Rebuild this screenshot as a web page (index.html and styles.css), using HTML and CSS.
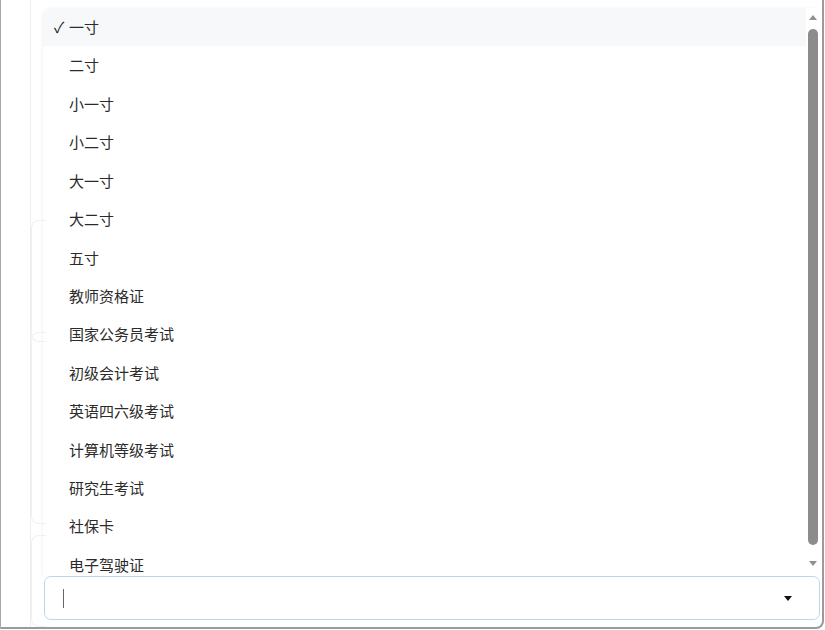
FILE: index.html
```html
<!DOCTYPE html>
<html lang="zh">
<head>
<meta charset="utf-8">
<title>选择</title>
<link rel="stylesheet" href="styles.css">
</head>
<body>
<div class="frame">
  <div class="backdrop">
    <div class="bg-line"></div>
    <div class="bg-card c1"></div>
    <div class="bg-card c2"></div>
    <div class="bg-card c3"></div>
  </div>
  <div class="combo">
    <div class="popup">
      <ul class="list">
        <li class="item selected"><span class="check">✓</span>一寸</li>
        <li class="item">二寸</li>
        <li class="item">小一寸</li>
        <li class="item">小二寸</li>
        <li class="item">大一寸</li>
        <li class="item">大二寸</li>
        <li class="item">五寸</li>
        <li class="item">教师资格证</li>
        <li class="item">国家公务员考试</li>
        <li class="item">初级会计考试</li>
        <li class="item">英语四六级考试</li>
        <li class="item">计算机等级考试</li>
        <li class="item">研究生考试</li>
        <li class="item">社保卡</li>
        <li class="item">电子驾驶证</li>
      </ul>
      <div class="scrollbar">
        <div class="arrow up"></div>
        <div class="thumb"></div>
        <div class="arrow down"></div>
      </div>
    </div>
    <div class="input">
      <span class="cursor"></span>
      <span class="caret"></span>
    </div>
  </div>
</div>
</body>
</html>
```
FILE: styles.css
```css
html, body {
  margin: 0;
  padding: 0;
  background: #ffffff;
  font-family: "Noto Sans CJK SC", "Noto Sans", sans-serif;
}
.frame {
  box-sizing: border-box;
  width: 824px;
  height: 629px;
  border-left: 1px solid #a8a8a8;
  border-right: 2px solid #9a9a9a;
  border-bottom: 2px solid #9a9a9a;
  border-bottom-right-radius: 8px;
  display: flex;
  overflow: hidden;
  background: #fff;
}
.backdrop {
  width: 42px;
  flex: none;
  position: relative;
}
.bg-line {
  position: absolute;
  left: 29px;
  top: 0;
  bottom: 0;
  width: 1px;
  background: #efefef;
}
.bg-card {
  position: absolute;
  left: 30px;
  width: 14px;
  border: 1px solid #f0f0f0;
  border-right: none;
  border-radius: 8px 0 0 8px;
}
.c1 { top: 220px; height: 120px; }
.c2 { top: 332px; height: 190px; }
.c3 { top: 535px; height: 90px; }
.combo {
  flex: 1;
  display: flex;
  flex-direction: column;
  padding-top: 8px;
  padding-right: 2px;
}
.popup {
  height: 568px;
  display: flex;
  background: #fff;
  border-top-left-radius: 8px;
  box-shadow: -1px 0 3px rgba(0,0,0,0.05);
  overflow: hidden;
}
.list {
  list-style: none;
  margin: 0;
  padding: 0;
  flex: 1;
  overflow: hidden;
}
.item {
  height: 38.43px;
  line-height: 38.43px;
  padding-left: 26px;
  font-size: 15px;
  color: #2b2b2b;
  position: relative;
  white-space: nowrap;
}
.item.selected {
  background: #f6f8fa;
}
.check {
  position: absolute;
  left: 11px;
  top: 0;
  font-size: 15px;
  color: #222;
}
.scrollbar {
  width: 14px;
  flex: none;
  display: flex;
  flex-direction: column;
  align-items: center;
  padding-top: 7px;
  box-sizing: border-box;
}
.arrow {
  width: 0;
  height: 0;
  border-left: 4px solid transparent;
  border-right: 4px solid transparent;
}
.arrow.up {
  border-bottom: 5px solid #909090;
}
.arrow.down {
  border-top: 5px solid #909090;
  margin-top: 16px;
}
.thumb {
  width: 10px;
  height: 516px;
  margin-top: 9px;
  background: #8c8c8c;
  border-radius: 5px;
}
.input {
  box-sizing: border-box;
  height: 44px;
  margin-left: 1px;
  border: 1px solid #bcd6ee;
  border-radius: 7px;
  display: flex;
  align-items: center;
  padding: 0 27px 0 18px;
  background: #fff;
}
.cursor {
  width: 1px;
  height: 19px;
  background: #666;
}
.caret {
  margin-left: auto;
  width: 0;
  height: 0;
  border-left: 4px solid transparent;
  border-right: 4px solid transparent;
  border-top: 5px solid #111;
}
```
